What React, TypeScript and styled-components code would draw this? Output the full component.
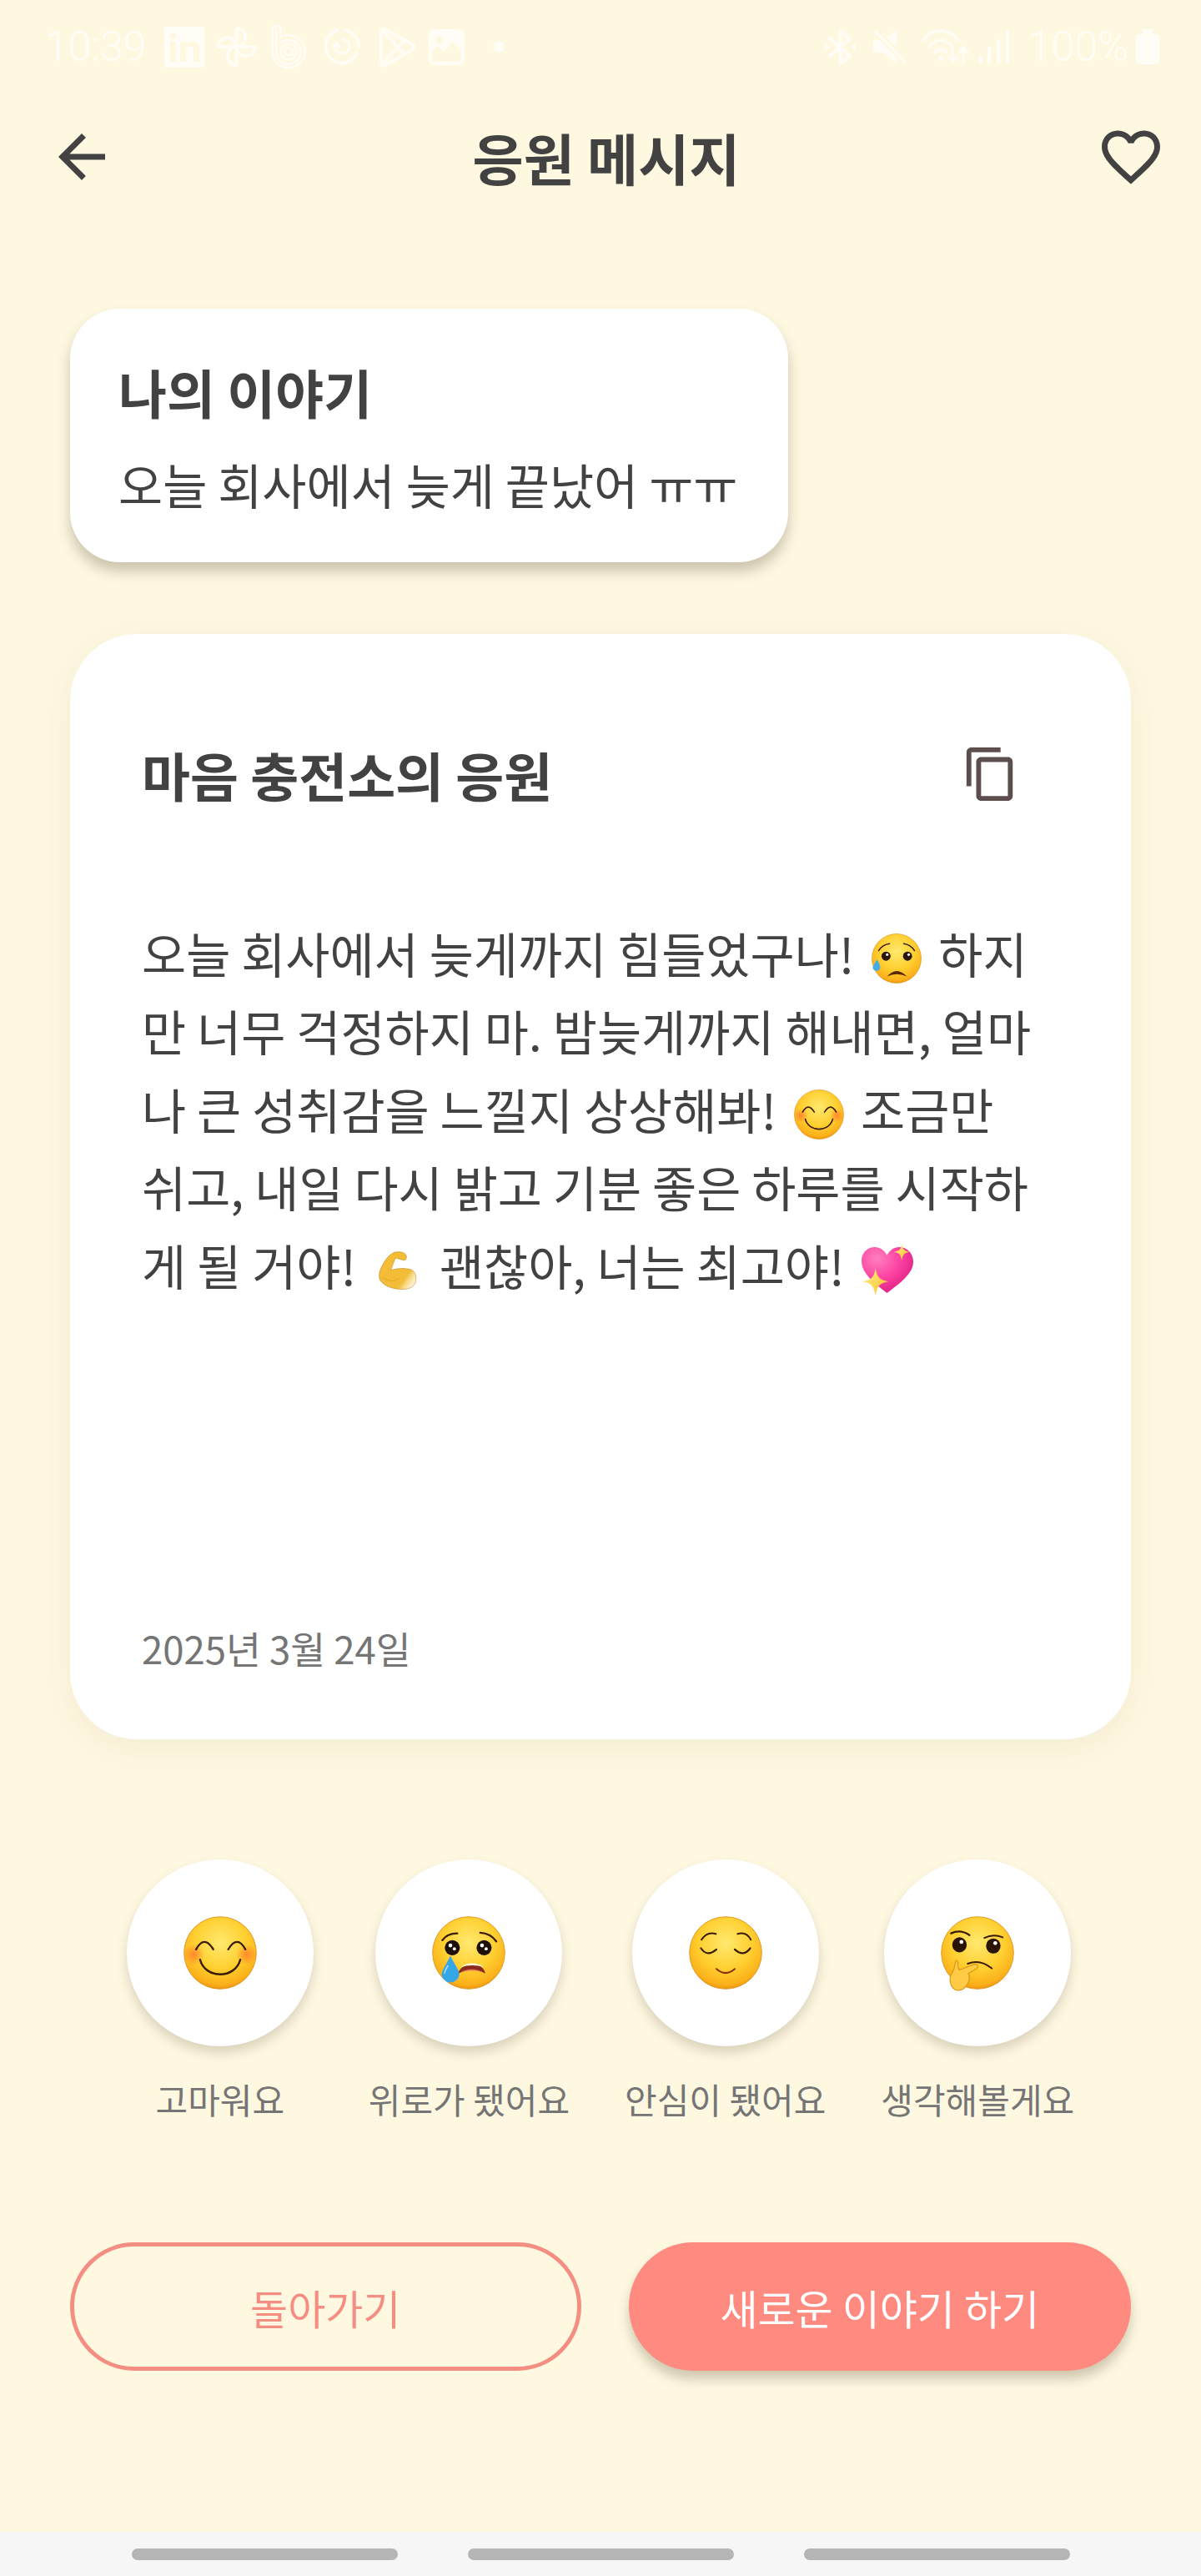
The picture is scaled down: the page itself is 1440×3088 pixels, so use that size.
import React from 'react';
import styled, { createGlobalStyle } from 'styled-components';

const BG = '#fff8e1';
const ST = '#fffdf6';
const FONT = `"Noto Sans CJK KR", "Noto Sans", sans-serif`;

const Global = createGlobalStyle`
  html, body { margin: 0; padding: 0; background: ${BG}; }
  * { box-sizing: border-box; }
`;

const Page = styled.div`
  width: 1440px;
  height: 3088px;
  background: ${BG};
  display: flex;
  flex-direction: column;
  font-family: ${FONT};
  color: #424242;
  overflow: hidden;
`;

const StatusBar = styled.div`
  height: 112px;
  padding: 0 50px 0 54px;
  display: flex;
  align-items: center;
  justify-content: space-between;
  flex: none;
`;
const StatusGroup = styled.div`
  display: flex;
  align-items: center;
`;
const StatusText = styled.span<{ $ml?: number }>`
  font-family: Roboto, "Liberation Sans", sans-serif;
  font-weight: 300;
  font-size: 50px;
  line-height: 60px;
  color: ${ST};
  margin-left: ${p => p.$ml ?? 0}px;
  margin-top: 0;
`;
const Glyph = styled.svg<{ $w: number; $h: number; $ml: number }>`
  width: ${p => p.$w}px;
  height: ${p => p.$h}px;
  margin-left: ${p => p.$ml}px;
  flex: none;
  display: block;
  overflow: visible;
`;

const Header = styled.header`
  height: 152px;
  padding: 0 42px 0 56px;
  display: grid;
  grid-template-columns: 1fr auto 1fr;
  align-items: center;
  flex: none;
`;
const HeaderTitle = styled.h1`
  margin: 0;
  font-size: 66.5px;
  line-height: 90px;
  font-weight: 700;
  color: #424242;
`;
const MaterialIcon = styled.svg<{ $size: number; $justify?: string; $color?: string }>`
  width: ${p => p.$size}px;
  height: ${p => p.$size}px;
  fill: ${p => p.$color ?? '#424242'};
  justify-self: ${p => p.$justify ?? 'start'};
  display: block;
  flex: none;
`;

const Content = styled.main`
  padding: 106px 84px 0;
  display: flex;
  flex-direction: column;
  flex: 1;
`;

const StoryCard = styled.section`
  width: 861px;
  height: 304px;
  background: #fff;
  border-radius: 60px;
  padding: 59px 0 0 58px;
  box-shadow: 0 11px 16px rgba(70, 60, 40, 0.28);
`;
const StoryTitle = styled.h2`
  margin: 0;
  font-size: 63px;
  line-height: 80px;
  font-weight: 700;
  white-space: nowrap;
`;
const StoryText = styled.p`
  margin: 29px 0 0;
  font-size: 57.75px;
  line-height: 84px;
  font-weight: 400;
  white-space: nowrap;
`;

const MessageCard = styled.section`
  margin-top: 86px;
  height: 1325px;
  background: #fff;
  border-radius: 80px;
  padding: 108px 100px 0 86px;
  display: flex;
  flex-direction: column;
  box-shadow: 0 10px 40px rgba(90, 70, 30, 0.07);
`;
const MessageHead = styled.div`
  height: 120px;
  margin-right: -14px;
  padding-right: 47px;
  display: flex;
  align-items: center;
  justify-content: space-between;
`;
const MessageTitle = styled.h2`
  margin: 0;
  font-size: 63px;
  line-height: 80px;
  font-weight: 700;
`;
const MessageBody = styled.p`
  margin: 108px 0 0;
  font-size: 57.75px;
  line-height: 93.4px;
  font-weight: 400;
`;
const MessageDate = styled.div`
  margin-top: auto;
  margin-bottom: 80px;
  font-size: 45.5px;
  line-height: 60px;
  color: #757575;
`;

const EmojiSvg = styled.svg<{ $size: number; $ml?: number; $mr?: number; $va?: number }>`
  width: ${p => p.$size}px;
  height: ${p => p.$size}px;
  margin-left: ${p => p.$ml ?? 0}px;
  margin-right: ${p => p.$mr ?? 0}px;
  vertical-align: ${p => p.$va ?? 0}px;
  overflow: visible;
`;

const Reactions = styled.div`
  margin-top: 144px;
  display: flex;
  justify-content: center;
  gap: 66px;
`;
const Reaction = styled.div`
  display: flex;
  flex-direction: column;
  align-items: center;
`;
const ReactionCircle = styled.div`
  width: 224px;
  height: 224px;
  border-radius: 50%;
  background: #fff;
  display: flex;
  align-items: center;
  justify-content: center;
  box-shadow: 0 8px 14px rgba(70, 60, 40, 0.2);
`;
const ReactionLabel = styled.span`
  margin-top: 33px;
  font-size: 42px;
  line-height: 60px;
  color: #757575;
  white-space: nowrap;
`;

const Buttons = styled.div`
  margin-top: 142px;
  display: flex;
  gap: 57px;
`;
const Button = styled.button<{ $primary?: boolean }>`
  flex: 1;
  height: 154px;
  border-radius: 77px;
  font-family: ${FONT};
  font-size: 49px;
  font-weight: 400;
  border: ${p => (p.$primary ? 'none' : '5px solid #f58e82')};
  background: ${p => (p.$primary ? '#ff8a80' : 'transparent')};
  color: ${p => (p.$primary ? '#fff' : '#f58e82')};
  box-shadow: ${p => (p.$primary ? '0 10px 14px rgba(70, 60, 40, 0.26)' : 'none')};
`;

const NavBar = styled.nav`
  height: 53px;
  background: #f6f6f6;
  display: flex;
  justify-content: center;
  align-items: flex-start;
  padding-top: 20px;
  gap: 84px;
  flex: none;
`;
const NavPill = styled.span`
  width: 319px;
  height: 14px;
  border-radius: 7px;
  background: #b5b5b5;
`;

type EmojiProps = { size: number; ml?: number; mr?: number; va?: number };

const Face: React.FC<EmojiProps & { children: React.ReactNode }> = ({ size, ml, mr, va, children }) => (
  <EmojiSvg viewBox="0 0 64 64" $size={size} $ml={ml} $mr={mr} $va={va}>
    <defs>
      <radialGradient id="faceFill" cx="0.5" cy="0.36" r="0.66">
        <stop offset="0" stopColor="#ffe96f" />
        <stop offset="0.55" stopColor="#ffcf30" />
        <stop offset="0.88" stopColor="#fbb01a" />
        <stop offset="1" stopColor="#e98d0e" />
      </radialGradient>
      <radialGradient id="blush">
        <stop offset="0" stopColor="#ff7a2e" stopOpacity="0.85" />
        <stop offset="1" stopColor="#ff7a2e" stopOpacity="0" />
      </radialGradient>
    </defs>
    <circle cx="32" cy="32" r="31.5" fill="url(#faceFill)" stroke="#d98a12" strokeWidth="0.6" />
    {children}
  </EmojiSvg>
);

const line = { fill: 'none', stroke: '#3a1d06', strokeLinecap: 'round' as const };

const SmileEmoji: React.FC<EmojiProps> = p => (
  <Face {...p}>
    <circle cx="9" cy="33.5" r="9" fill="url(#blush)" />
    <circle cx="55" cy="33.5" r="9" fill="url(#blush)" />
    <path d="M11 29 Q18 16 26 29" {...line} strokeWidth="1.7" />
    <path d="M39 29 Q47 16 54 29" {...line} strokeWidth="1.7" />
    <path d="M14.5 38 C19 55 45 55 49.5 38" {...line} strokeWidth="1.8" />
  </Face>
);

const CryEmoji: React.FC<EmojiProps> = p => (
  <Face {...p}>
    <path d="M9 21 Q13 15 22 15" {...line} strokeWidth="1.7" />
    <path d="M42 14.5 Q51 15 56 22" {...line} strokeWidth="1.7" />
    <circle cx="17.7" cy="27.5" r="6.6" fill="#1f1006" />
    <circle cx="45.4" cy="27.5" r="6.6" fill="#1f1006" />
    <circle cx="16" cy="25.5" r="1.7" fill="#fff" />
    <circle cx="19.5" cy="28.5" r="1.4" fill="#fff" />
    <circle cx="43.6" cy="25.5" r="1.7" fill="#fff" />
    <circle cx="47.2" cy="28.5" r="1.4" fill="#fff" />
    <path d="M23 50 C24 41 44 38 46.5 50 C40 46 30 46 23 50Z" fill="#8a2a1c" />
    <path d="M25 49 C30 45.5 39 45.5 44.5 49 C39 47.3 31 47.3 25 49Z" fill="#ef7b5c" />
    <path d="M25 44.5 C30 40 40 40 45 44.5 C39 42.3 31 42.3 25 44.5Z" fill="#fff3dc" />
    <path d="M16 34.5 C19 41 24 47 23.7 51 A7.7 7.7 0 0 1 8.4 51 C8.4 47 13 41 16 34.5Z" fill="#36a7e6" />
    <path d="M11 50 C11 47 13 45 14 43" stroke="#bfeaff" strokeWidth="1" fill="none" />
  </Face>
);

const RelievedEmoji: React.FC<EmojiProps> = p => (
  <Face {...p}>
    <path d="M11 20.5 Q16 13 23.5 15.5" {...line} strokeWidth="1.5" />
    <path d="M42.5 15.5 Q50 13 54 20.5" {...line} strokeWidth="1.5" />
    <path d="M10.5 28 Q16 36 24 29" {...line} strokeWidth="1.6" />
    <path d="M40 29 Q47.5 36 53.5 28" {...line} strokeWidth="1.6" />
    <path d="M24 46 Q32 53 40 46" fill="none" stroke="#8a2d0c" strokeWidth="1.5" strokeLinecap="round" />
  </Face>
);

const ThinkEmoji: React.FC<EmojiProps> = p => (
  <Face {...p}>
    <path d="M9 15 Q17 11 25 16.5" {...line} strokeWidth="1.7" />
    <path d="M38 19 Q46 15 54 18.5" {...line} strokeWidth="1.4" />
    <ellipse cx="16.3" cy="25" rx="6.3" ry="6.6" fill="#2a1405" />
    <ellipse cx="45.8" cy="26" rx="6.3" ry="6.6" fill="#2a1405" />
    <circle cx="18" cy="22.5" r="1.7" fill="#fff" />
    <circle cx="47.5" cy="23.5" r="1.7" fill="#fff" />
    <path d="M23.5 41.5 Q34 37 44.5 45.5" {...line} strokeWidth="1.5" />
    <path
      d="M13 39 C15 38 15.5 41 15 44 L16 47 L29 42 C32 41 33.5 44 31 46 L24 50 C26 53 25 58 22 61 C19 65 14 66 11 63 C8 60 7.5 55 8.5 52 L11.5 46 Z"
      fill="#ffcb45"
      stroke="#dd9216"
      strokeWidth="0.8"
    />
  </Face>
);

const SadEmoji: React.FC<EmojiProps> = p => (
  <Face {...p}>
    <path d="M9 22 Q14 14 23 13" {...line} strokeWidth="1.6" />
    <path d="M41 13 Q50 14 55 22" {...line} strokeWidth="1.6" />
    <circle cx="18.5" cy="29" r="5.8" fill="#2a1405" />
    <circle cx="46" cy="29" r="5.8" fill="#2a1405" />
    <circle cx="20" cy="27" r="1.7" fill="#fff" />
    <circle cx="47.5" cy="27" r="1.7" fill="#fff" />
    <path d="M20 55 Q32 41 45 55 Q32 49 20 55Z" fill="#5b2708" />
    <path d="M7 33 C9 37 11.5 41 11 44 A4.8 4.8 0 0 1 1.6 44 C1.6 41 5 37 7 33Z" fill="#43ace6" />
  </Face>
);

const MuscleEmoji: React.FC<EmojiProps> = ({ size, ml, mr, va }) => (
  <EmojiSvg viewBox="0 0 64 64" $size={size} $ml={ml} $mr={mr} $va={va}>
    <defs>
      <linearGradient id="muscleFill" x1="0.1" y1="0.2" x2="1" y2="0.85">
        <stop offset="0" stopColor="#f6bc35" />
        <stop offset="0.7" stopColor="#f2bd38" />
        <stop offset="1" stopColor="#fbe79c" stopOpacity="0.3" />
      </linearGradient>
    </defs>
    <path
      d="M26 1.5 C34 0 43 1 45 7 C46.5 11 44 15 41 14.5 C37 14 33 12 27.5 11 C25 17 22 24 20 31 C28 28 40 27 50 29 C60 31 63 42 60 51 C56 60 48 62 38 62 C26 62 10 58 3 48 C-1 42 1 32 5 25 C10 15 16 6 26 1.5Z"
      fill="url(#muscleFill)"
      stroke="#b77a1a"
      strokeWidth="1"
      strokeOpacity="0.7"
    />
    <path d="M6 42 C14 50 26 50 34 44" fill="none" stroke="#d99a25" strokeWidth="1.2" strokeOpacity="0.7" />
  </EmojiSvg>
);

const HeartEmoji: React.FC<EmojiProps> = ({ size, ml, mr, va }) => (
  <EmojiSvg viewBox="0 0 64 64" $size={size} $ml={ml} $mr={mr} $va={va}>
    <defs>
      <radialGradient id="heartFill" cx="0.3" cy="0.25" r="0.85">
        <stop offset="0" stopColor="#ff7fc0" />
        <stop offset="0.55" stopColor="#fb3f9f" />
        <stop offset="1" stopColor="#d91e83" />
      </radialGradient>
      <linearGradient id="sparkFill" x1="0" y1="0" x2="1" y2="1">
        <stop offset="0" stopColor="#fff08a" />
        <stop offset="1" stopColor="#fdbf26" />
      </linearGradient>
    </defs>
    <path
      d="M32 60 C22 52 1 38 1 21 C1 10 9 4 17 4 C24 4 29 8 32 14 C35 8 40 4 47 4 C56 4 64 11 64 22 C64 38 42 52 32 60Z"
      fill="url(#heartFill)"
    />
    <path d="M50 0 C51 7 53 9 60 10 C53 11 51 13 50 21 C49 13 47 11 40 10 C47 9 49 7 50 0Z" fill="url(#sparkFill)" />
    <path d="M18 30 C20 41 23 44 34 46 C23 48 20 51 18 63 C16 51 13 48 2 46 C13 44 16 41 18 30Z" fill="url(#sparkFill)" />
  </EmojiSvg>
);

const Time = () => <StatusText>10:39</StatusText>;

const StatusLeft = () => (
  <StatusGroup>
    <Time />
    <Glyph viewBox="0 0 48 49" $w={48} $h={49} $ml={22}>
      <rect width="48" height="49" rx="3" fill={ST} />
      <rect x="7" y="18" width="7" height="24" fill={BG} />
      <circle cx="10.5" cy="11" r="4" fill={BG} />
      <path d="M19 18 H26 V21.5 C28 18.5 31 17.5 34 17.5 C40 17.5 42 21.5 42 27 V42 H35 V29 C35 25.5 34 23.5 31 23.5 C28 23.5 26 25.5 26 29 V42 H19Z" fill={BG} />
    </Glyph>
    <Glyph viewBox="0 0 49 48" $w={49} $h={48} $ml={14}>
      <g fill="none" stroke={ST} strokeWidth="3.6" strokeLinejoin="round">
        <path d="M24.5 24 V2 A11 11 0 0 1 24.5 24Z" />
        <path d="M24.5 24 H47 A11 11 0 0 1 24.5 24Z" />
        <path d="M24.5 24 V46 A11 11 0 0 1 24.5 24Z" />
        <path d="M24.5 24 H2 A11 11 0 0 1 24.5 24Z" />
      </g>
    </Glyph>
    <Glyph viewBox="0 0 42 53" $w={42} $h={53} $ml={17}>
      <g fill="none" stroke={ST} strokeWidth="2.4">
        <path d="M1.5 6 A5 5 0 0 1 11.5 6 V14.5 A19.5 19.5 0 1 1 1.5 32Z" />
        <path d="M6.5 7 V32 A14.5 14.5 0 1 0 21 18 A14 14 0 0 0 12 21" />
        <circle cx="21" cy="32" r="9.5" />
        <circle cx="21" cy="32" r="4.5" />
      </g>
    </Glyph>
    <Glyph viewBox="0 0 45 44" $w={45} $h={44} $ml={20}>
      <g fill="none" stroke={ST} strokeWidth="3.6" strokeLinecap="round">
        <path d="M27 2 A20.5 20.5 0 0 1 43 22" />
        <path d="M18 2 A20.5 20.5 0 0 0 22.5 42 A20.5 20.5 0 0 0 41 29" />
        <path d="M24 13 A8.5 8.5 0 1 1 15 22" strokeWidth="3.2" />
      </g>
      <path d="M10 22 L17 15 L22 23Z" fill={ST} />
    </Glyph>
    <Glyph viewBox="0 0 44 49" $w={44} $h={49} $ml={22}>
      <g fill="none" stroke={ST} strokeWidth="3.6" strokeLinejoin="round" strokeLinecap="round">
        <path d="M3 4.5 C3 2.5 5 1.5 7 2.5 L40 21 C43 23 43 26 40 28 L7 46.5 C5 47.5 3 46.5 3 44.5Z" />
        <path d="M4 4 L31 33" />
        <path d="M4 45 L31 16" />
      </g>
    </Glyph>
    <Glyph viewBox="0 0 43 43" $w={43} $h={43} $ml={16}>
      <rect width="43" height="43" rx="7" fill={ST} />
      <circle cx="13" cy="13" r="4.5" fill={BG} />
      <path d="M4 36 V27 L11 20 L18 27 L29 15 L39 25 V36 A3 3 0 0 1 36 39 H7 A3 3 0 0 1 4 36Z" fill={BG} />
    </Glyph>
    <Glyph viewBox="0 0 14 14" $w={14} $h={14} $ml={34}>
      <circle cx="7" cy="7" r="7" fill={ST} />
    </Glyph>
  </StatusGroup>
);

const StatusRight = () => (
  <StatusGroup>
    <Glyph viewBox="0 0 37 43" $w={37} $h={43} $ml={0}>
      <path d="M6 11 L30 32 L18.5 41 V2 L30 12 L6 32" fill="none" stroke={ST} strokeWidth="3.8" strokeLinejoin="round" strokeLinecap="round" />
      <path d="M0 17 L5.5 21.5 L0 26Z M37 17 L31.5 21.5 L37 26Z" fill={ST} />
    </Glyph>
    <Glyph viewBox="0 0 40 40" $w={40} $h={40} $ml={21}>
      <path d="M0 14 Q0 12 2 12 H8 L28 32 V40 L13 27 H2 Q0 27 0 25Z" fill={ST} />
      <path d="M16 9 L28 0 V20Z" fill={ST} />
      <path d="M3 2 L38 38" stroke={BG} strokeWidth="7" />
      <path d="M3 2 L38 38" stroke={ST} strokeWidth="3" strokeLinecap="round" />
    </Glyph>
    <Glyph viewBox="0 0 57 42" $w={57} $h={42} $ml={18}>
      <g fill="none" stroke={ST} strokeWidth="3.6" strokeLinecap="round">
        <path d="M2 13 C12 -2 32 -2 44 13" />
        <path d="M9 21 C17 11 29 11 37 21" />
        <path d="M16 28 C20 23 26 23 30 28" />
        <path d="M37 22 V39 M32 33 L37 39 L42 33" strokeWidth="3" />
        <path d="M50 39 V22 M45 28 L50 22 L55 28" strokeWidth="3" />
      </g>
      <circle cx="23" cy="35" r="3" fill={ST} />
    </Glyph>
    <Glyph viewBox="0 0 38 40" $w={38} $h={40} $ml={11}>
      <rect x="0" y="31" width="5" height="9" rx="2" fill={ST} />
      <rect x="11" y="20" width="4" height="20" rx="1.5" fill={ST} />
      <rect x="22" y="11" width="4" height="29" rx="1.5" fill={ST} />
      <rect x="33" y="0" width="4" height="40" rx="1.5" fill={ST} />
    </Glyph>
    <StatusText $ml={22}>100%</StatusText>
    <Glyph viewBox="0 0 28 42" $w={28} $h={42} $ml={9}>
      <path d="M8 2 Q8 0 10 0 H18 Q20 0 20 2 V6 H25 Q28 6 28 9 V39 Q28 42 25 42 H3 Q0 42 0 39 V9 Q0 6 3 6 H8Z" fill={ST} />
    </Glyph>
  </StatusGroup>
);

const reactions: { label: string; Emoji: React.FC<EmojiProps> }[] = [
  { label: '고마워요', Emoji: SmileEmoji },
  { label: '위로가 됐어요', Emoji: CryEmoji },
  { label: '안심이 됐어요', Emoji: RelievedEmoji },
  { label: '생각해볼게요', Emoji: ThinkEmoji },
];

export default function App() {
  return (
    <Page>
      <Global />
      <StatusBar>
        <StatusLeft />
        <StatusRight />
      </StatusBar>
      <Header>
        <MaterialIcon viewBox="0 0 24 24" $size={84}>
          <path d="M20 11H7.83l5.59-5.59L12 4l-8 8 8 8 1.41-1.41L7.83 13H20v-2z" />
        </MaterialIcon>
        <HeaderTitle>응원 메시지</HeaderTitle>
        <MaterialIcon viewBox="0 0 24 24" $size={84} $justify="end">
          <path d="M16.5 3c-1.74 0-3.41.81-4.5 2.09C10.91 3.81 9.24 3 7.5 3 4.42 3 2 5.42 2 8.5c0 3.78 3.4 6.86 8.55 11.54L12 21.35l1.45-1.32C18.6 15.36 22 12.28 22 8.5 22 5.42 19.58 3 16.5 3zm-4.4 15.55l-.1.1-.1-.1C7.14 14.24 4 11.39 4 8.5 4 6.5 5.5 5 7.5 5c1.54 0 3.04.99 3.57 2.36h1.87C13.46 5.99 14.96 5 16.5 5c2 0 3.5 1.5 3.5 3.5 0 2.89-3.14 5.74-7.9 10.05z" />
        </MaterialIcon>
      </Header>
      <Content>
        <StoryCard>
          <StoryTitle>나의 이야기</StoryTitle>
          <StoryText>오늘 회사에서 늦게 끝났어 ㅠㅠ</StoryText>
        </StoryCard>
        <MessageCard>
          <MessageHead>
            <MessageTitle>마음 충전소의 응원</MessageTitle>
            <MaterialIcon viewBox="0 0 24 24" $size={70} $color="#5d4e4e">
              <path d="M16 1H4c-1.1 0-2 .9-2 2v14h2V3h12V1zm3 4H8c-1.1 0-2 .9-2 2v14c0 1.1.9 2 2 2h11c1.1 0 2-.9 2-2V7c0-1.1-.9-2-2-2zm0 16H8V7h11v14z" />
            </MaterialIcon>
          </MessageHead>
          <MessageBody>
            오늘 회사에서 늦게까지 힘들었구나! <SadEmoji size={60} ml={8} mr={20} va={-12} />
            하지만 너무 걱정하지 마. 밤늦게까지 해내면, 얼마나 큰 성취감을 느낄지 상상해봐!{' '}
            <SmileEmoji size={60} ml={8} mr={20} va={-12} />
            조금만 쉬고, 내일 다시 밝고 기분 좋은 하루를 시작하게 될 거야!{' '}
            <MuscleEmoji size={47} ml={14} mr={26} va={-6} />
            괜찮아, 너는 최고야! <HeartEmoji size={63} ml={6} va={-13} />
          </MessageBody>
          <MessageDate>2025년 3월 24일</MessageDate>
        </MessageCard>
        <Reactions>
          {reactions.map(({ label, Emoji }) => (
            <Reaction key={label}>
              <ReactionCircle>
                <Emoji size={88} />
              </ReactionCircle>
              <ReactionLabel>{label}</ReactionLabel>
            </Reaction>
          ))}
        </Reactions>
        <Buttons>
          <Button>돌아가기</Button>
          <Button $primary>새로운 이야기 하기</Button>
        </Buttons>
      </Content>
      <NavBar>
        <NavPill />
        <NavPill />
        <NavPill />
      </NavBar>
    </Page>
  );
}
